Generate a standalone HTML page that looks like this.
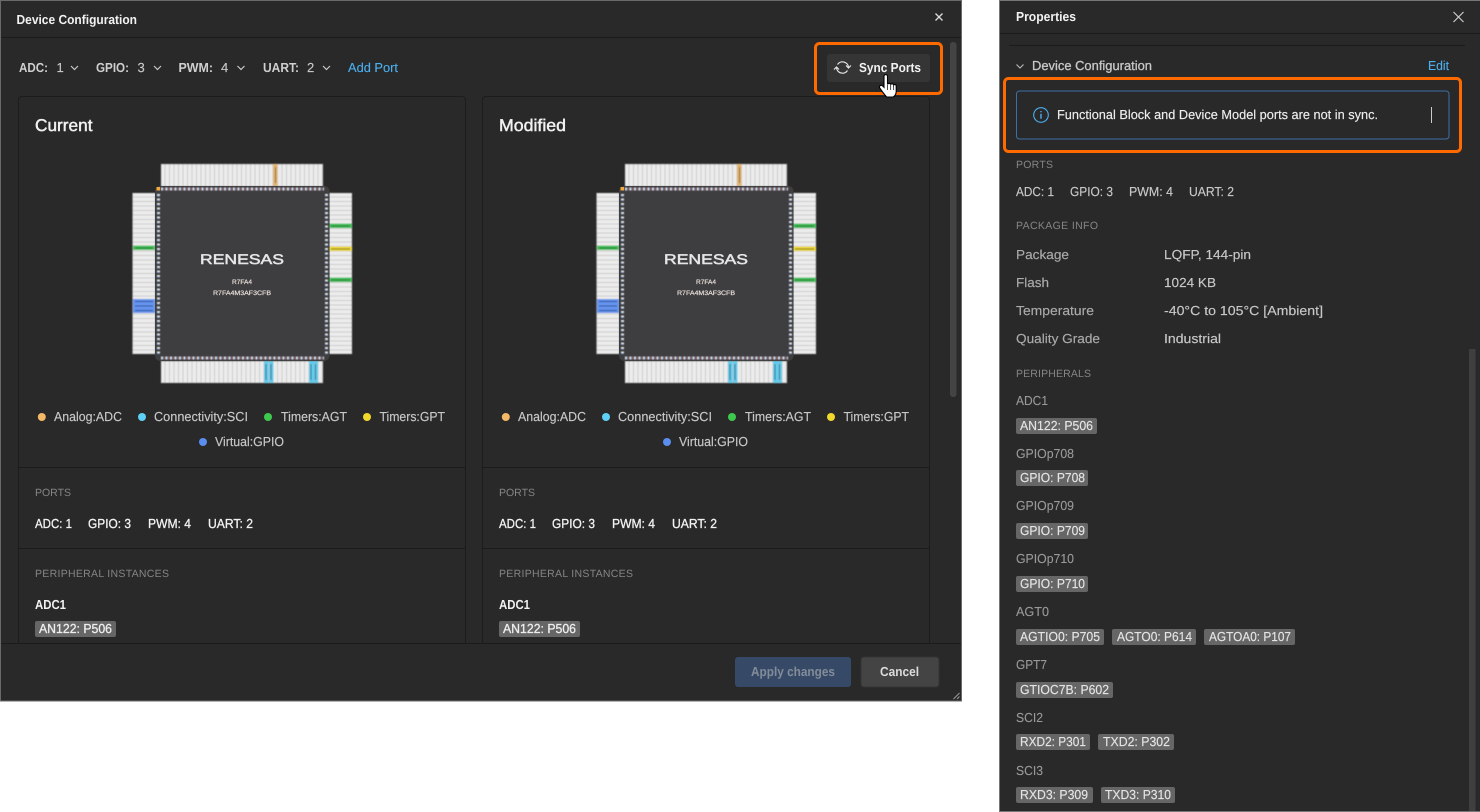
<!DOCTYPE html>
<html lang="en"><head><meta charset="utf-8"><title>Device Configuration</title>
<style>
html,body{margin:0;padding:0;background:#fff;width:1480px;height:812px;overflow:hidden}
svg{display:block;font-family:"Liberation Sans",sans-serif}
.b{font-weight:bold}
.w{fill:#f2f2f2}
.s{font-size:13px}
.c{fill:#c8c8c8;stroke:#c8c8c8;stroke-width:.15px}
.g{fill:#999;stroke:#999;stroke-width:.1px}
.h{font-size:10.5px;fill:#858585}
.l{fill:#4cb0f0;stroke:#4cb0f0;stroke-width:.1px}
.tag{fill:#666}
.tt{font-size:13px;fill:#eee;stroke:#eee;stroke-width:.15px}
</style></head><body>
<svg width="1480" height="812" viewBox="0 0 1480 812" xmlns="http://www.w3.org/2000/svg" text-rendering="geometricPrecision">
<defs>
<filter id="soft" x="-5%" y="-5%" width="110%" height="110%"><feGaussianBlur stdDeviation=".4"/></filter>
<pattern id="vs" width="4.5" height="22" patternUnits="userSpaceOnUse" x="29"><rect width="4.5" height="22" fill="#ececec"/><rect x="3.500" width="1" height="22" fill="#cccccc"/></pattern>
<pattern id="hs" width="23" height="4.5" patternUnits="userSpaceOnUse" y="29"><rect width="23" height="4.5" fill="#ececec"/><rect y="3.500" width="23" height="1" fill="#cccccc"/></pattern>
<symbol id="chip" width="220" height="220" viewBox="0 0 220 220" overflow="visible">
<g filter="url(#soft)">
<rect x="29" y="0" width="162" height="22.500" fill="url(#vs)" stroke="#777" stroke-width=".6"/>
<rect x="29" y="197" width="162" height="22" fill="url(#vs)" stroke="#777" stroke-width=".6"/>
<rect x="0.500" y="29" width="23" height="161" fill="url(#hs)" stroke="#777" stroke-width=".6"/>
<rect x="197" y="29" width="23" height="161" fill="url(#hs)" stroke="#777" stroke-width=".6"/>
<rect x="141" y="0" width="4.500" height="22" fill="#e4b672"/><rect x="143" y="3" width="1" height="16" fill="#8a6a3a"/>
<rect x="132" y="197" width="4.500" height="22" fill="#66cbeb"/><rect x="137" y="197" width="4.500" height="22" fill="#66cbeb"/>
<rect x="177" y="197" width="4.500" height="22" fill="#66cbeb"/><rect x="181.500" y="197" width="4.500" height="22" fill="#66cbeb"/>
<rect x="133.500" y="200" width="1" height="16" fill="#37708a"/><rect x="138.500" y="200" width="1" height="16" fill="#37708a"/><rect x="178.500" y="200" width="1" height="16" fill="#37708a"/><rect x="183" y="200" width="1" height="16" fill="#37708a"/>
<rect x="1" y="81.500" width="22" height="4.500" fill="#4cc25e"/><rect x="3" y="83.500" width="18" height="1" fill="#1d6a2a"/>
<rect x="1" y="135" width="22" height="14" fill="#6594f0"/><rect x="3" y="137" width="18" height="1" fill="#2d4f96"/><rect x="3" y="141.500" width="18" height="1" fill="#2d4f96"/><rect x="3" y="146" width="18" height="1" fill="#2d4f96"/>
<rect x="197" y="59.500" width="23" height="4.500" fill="#4cc25e"/><rect x="199" y="61.500" width="19" height="1" fill="#1d6a2a"/>
<rect x="197" y="82.500" width="23" height="4.500" fill="#ecd83e"/><rect x="199" y="84.500" width="19" height="1" fill="#857818"/>
<rect x="197" y="113.500" width="23" height="4.500" fill="#4cc25e"/><rect x="199" y="115.500" width="19" height="1" fill="#1d6a2a"/>
</g>
<rect x="23" y="22" width="174.500" height="175" rx="5" fill="#3e3e40"/>
<g fill="none" stroke-width="3" filter="url(#soft)">
<path d="M29 25H192M29 194H192" stroke="#e6e6e6" stroke-dasharray="2.200 2.300"/>
<path d="M26.500 30V192M194.500 30V192" stroke="#e6e6e6" stroke-dasharray="2.200 2.300"/>
<path d="M30.500 25H192M30.500 194H192" stroke="#6c9bd0" stroke-dasharray="1 3.500"/>
<path d="M32 25H192M32 194H192" stroke="#c46a62" stroke-dasharray=".8 3.700"/>
<path d="M26.500 31.500V192M194.500 31.500V192" stroke="#7d9fc4" stroke-dasharray="1 3.500"/>
</g>
<rect x="24.500" y="23" width="3.500" height="3.500" fill="#f2a83a"/>
<text x="68" y="100" font-size="14" fill="#e6e6e6" stroke="#e6e6e6" stroke-width=".5" textLength="84" lengthAdjust="spacingAndGlyphs">RENESAS</text>
</symbol>
</defs>

<rect width="1480" height="812" fill="#fff"/>

<!-- dialog -->
<rect x="0.500" y="0.500" width="961" height="700.500" fill="#292929" stroke="#6a6a6a"/>
<rect x="1" y="37" width="960" height="1" fill="#1b1b1b"/>
<text x="16.500" y="24" class="b w" font-size="13" textLength="120.500" lengthAdjust="spacingAndGlyphs">Device Configuration</text>
<path d="M935.500 13.500l7 7m0-7l-7 7" stroke="#ddd" stroke-width="1.300" fill="none"/>

<g class="s b" fill="#cfcfcf">
<text x="19" y="72" textLength="29" lengthAdjust="spacingAndGlyphs">ADC:</text>
<text x="96" y="72" textLength="33" lengthAdjust="spacingAndGlyphs">GPIO:</text>
<text x="178.500" y="72" textLength="34.500" lengthAdjust="spacingAndGlyphs">PWM:</text>
<text x="263" y="72" textLength="36" lengthAdjust="spacingAndGlyphs">UART:</text>
</g>
<g class="s c">
<text x="56.500" y="72">1</text><text x="137.500" y="72">3</text><text x="221" y="72">4</text><text x="307" y="72">2</text>
</g>
<path d="M71 66l3.500 3.500L78 66M154 66l3.500 3.500L161 66M237.500 66l3.500 3.500L244.500 66M323 66l3.500 3.500L330 66" fill="none" stroke="#c8c8c8" stroke-width="1.200"/>
<text x="348" y="72" class="s l" textLength="50" lengthAdjust="spacingAndGlyphs">Add Port</text>

<rect x="827" y="54" width="103" height="28" rx="3" fill="#353535"/>
<g fill="none" stroke="#e6e6e6" stroke-width="1.200">
<path d="M837.500 64.500A6 6 0 0 1 848.500 67.500"/><path d="M847.500 70.500A6 6 0 0 1 836.500 67.500"/>
<path d="M846 65.500l2.500 2.500 2.500-2.500M834 69.500l2.500-2.500 2.500 2.500"/>
</g>
<text x="859" y="72" class="s b w" textLength="62" lengthAdjust="spacingAndGlyphs">Sync Ports</text>

<rect x="950" y="42" width="6.500" height="355" rx="3" fill="#444"/>

<!-- cards -->
<g fill="none" stroke="#1c1c1c">
<path d="M18.500 643V100a3.500 3.500 0 0 1 3.500-3.500H462a3.500 3.500 0 0 1 3.500 3.500V643"/>
<path d="M482.500 643V100a3.500 3.500 0 0 1 3.500-3.500H926a3.500 3.500 0 0 1 3.500 3.500V643"/>
<path d="M19 467.500H465M19 548.500H465M483 467.500H929M483 548.500H929"/>
</g>

<text x="35" y="131" font-size="17" class="w" textLength="57.500" lengthAdjust="spacingAndGlyphs" stroke="#f2f2f2" stroke-width=".45">Current</text>
<text x="499" y="131" font-size="17" class="w" textLength="67" lengthAdjust="spacingAndGlyphs" stroke="#f2f2f2" stroke-width=".45">Modified</text>

<use href="#chip" x="132" y="164" width="220" height="220"/>
<use href="#chip" x="596" y="164" width="220" height="220"/>
<g font-size="6.500" fill="#f0e4e0" stroke="#f0e4e0" stroke-width=".15">
<text x="232" y="284" textLength="20" lengthAdjust="spacingAndGlyphs">R7FA4</text>
<text x="213" y="295" textLength="58" lengthAdjust="spacingAndGlyphs">R7FA4M3AF3CFB</text>
<text x="696" y="284" textLength="20" lengthAdjust="spacingAndGlyphs">R7FA4</text>
<text x="677" y="295" textLength="58" lengthAdjust="spacingAndGlyphs">R7FA4M3AF3CFB</text>
</g>

<!-- legends -->
<g class="s c">
<text x="54" y="421" textLength="68" lengthAdjust="spacingAndGlyphs">Analog:ADC</text>
<text x="154" y="421" textLength="94" lengthAdjust="spacingAndGlyphs">Connectivity:SCI</text>
<text x="281" y="421" textLength="66" lengthAdjust="spacingAndGlyphs">Timers:AGT</text>
<text x="379.500" y="421" textLength="65.500" lengthAdjust="spacingAndGlyphs">Timers:GPT</text>
<text x="215" y="446" textLength="69" lengthAdjust="spacingAndGlyphs">Virtual:GPIO</text>
<text x="518" y="421" textLength="68" lengthAdjust="spacingAndGlyphs">Analog:ADC</text>
<text x="618" y="421" textLength="94" lengthAdjust="spacingAndGlyphs">Connectivity:SCI</text>
<text x="745" y="421" textLength="66" lengthAdjust="spacingAndGlyphs">Timers:AGT</text>
<text x="843.500" y="421" textLength="65.500" lengthAdjust="spacingAndGlyphs">Timers:GPT</text>
<text x="679" y="446" textLength="69" lengthAdjust="spacingAndGlyphs">Virtual:GPIO</text>
</g>
<circle cx="41.800" cy="417" r="4" fill="#f5b869"/><circle cx="142" cy="417" r="4" fill="#5fd0f5"/><circle cx="268" cy="417" r="4" fill="#3ec94e"/><circle cx="367" cy="417" r="4" fill="#f0d92c"/><circle cx="203" cy="442" r="4" fill="#5b8def"/>
<circle cx="505.800" cy="417" r="4" fill="#f5b869"/><circle cx="606" cy="417" r="4" fill="#5fd0f5"/><circle cx="732" cy="417" r="4" fill="#3ec94e"/><circle cx="831" cy="417" r="4" fill="#f0d92c"/><circle cx="667" cy="442" r="4" fill="#5b8def"/>

<!-- card lower text -->
<g class="h">
<text x="35" y="496" textLength="36">PORTS</text>
<text x="35" y="577" textLength="134">PERIPHERAL INSTANCES</text>
<text x="499" y="496" textLength="36">PORTS</text>
<text x="499" y="577" textLength="134">PERIPHERAL INSTANCES</text>
</g>
<g class="s w" stroke="#f2f2f2" stroke-width=".3">
<text x="35" y="528" textLength="37" lengthAdjust="spacingAndGlyphs">ADC: 1</text>
<text x="88" y="528" textLength="43" lengthAdjust="spacingAndGlyphs">GPIO: 3</text>
<text x="148" y="528" textLength="43" lengthAdjust="spacingAndGlyphs">PWM: 4</text>
<text x="208" y="528" textLength="45" lengthAdjust="spacingAndGlyphs">UART: 2</text>
<text x="499" y="528" textLength="37" lengthAdjust="spacingAndGlyphs">ADC: 1</text>
<text x="552" y="528" textLength="43" lengthAdjust="spacingAndGlyphs">GPIO: 3</text>
<text x="612" y="528" textLength="43" lengthAdjust="spacingAndGlyphs">PWM: 4</text>
<text x="672" y="528" textLength="45" lengthAdjust="spacingAndGlyphs">UART: 2</text>
</g>
<text x="35" y="609" class="s b w" textLength="31" lengthAdjust="spacingAndGlyphs">ADC1</text>
<text x="499" y="609" class="s b w" textLength="31" lengthAdjust="spacingAndGlyphs">ADC1</text>
<rect x="35" y="621" width="81" height="16" rx="2" class="tag"/>
<rect x="499" y="621" width="81" height="16" rx="2" class="tag"/>
<text x="39" y="633" class="tt" textLength="73" lengthAdjust="spacingAndGlyphs" style="stroke-width:.3px">AN122: P506</text>
<text x="503" y="633" class="tt" textLength="73" lengthAdjust="spacingAndGlyphs" style="stroke-width:.3px">AN122: P506</text>

<!-- footer -->
<rect x="1" y="643" width="960" height="57.500" fill="#292929"/>
<rect x="1" y="643" width="960" height="1" fill="#1b1b1b"/>
<rect x="735" y="657" width="116" height="30" rx="3" fill="#364a68"/>
<text x="751" y="676" class="s b" fill="#838c98" textLength="84" lengthAdjust="spacingAndGlyphs">Apply changes</text>
<rect x="861" y="657" width="78" height="30" rx="3" fill="#444" stroke="#333"/>
<text x="880" y="676" class="s b" fill="#ddd" textLength="39" lengthAdjust="spacingAndGlyphs">Cancel</text>
<path d="M953.500 699l6-6M957 699l2.500-2.500" stroke="#999" fill="none"/>

<!-- orange highlight 1 -->
<rect x="815.500" y="43.500" width="126" height="50" rx="4" fill="none" stroke="#ff6a00" stroke-width="3"/>

<!-- hand cursor -->
<path d="M884 76.500c0-2.500 3.500-2.500 3.500 0v8c.3-1.500 3-1.500 3.200.2.300-1.300 2.800-1.200 3 .4.500-1 2.500-.8 2.500.9v5.500c0 2.500-1.500 4.500-3 5.500h-6.500c-1.500-1.500-3-3.500-4.500-5.500l-2.500-3.500c-1-2 1.300-3.500 3-2l1.300 1.300z" fill="#fff" stroke="#000" stroke-width="1.100"/>
<path d="M887.500 85v5M890.700 85v5M893.700 86v4" stroke="#000" stroke-width=".7" fill="none"/>

<!-- properties panel -->
<rect x="999.500" y="0.500" width="481" height="811" fill="#292929" stroke="#777"/>
<rect x="1000" y="33" width="480" height="1" fill="#1b1b1b"/>
<rect x="1009" y="45" width="456" height="1" fill="#1b1b1b"/>
<text x="1016" y="21" class="s b w" textLength="60" lengthAdjust="spacingAndGlyphs">Properties</text>
<path d="M1453.500 12l10 10m0-10l-10 10" stroke="#ccc" stroke-width="1.200" fill="none"/>

<path d="M1016.500 64.500l3.500 3.500 3.500-3.500" stroke="#bbb" stroke-width="1.100" fill="none"/>
<text x="1032" y="70" class="s c" textLength="120" lengthAdjust="spacingAndGlyphs" style="stroke-width:.3px">Device Configuration</text>
<text x="1428" y="70" class="s l" textLength="21" lengthAdjust="spacingAndGlyphs">Edit</text>

<rect x="1016.500" y="91" width="432.500" height="48" rx="3" fill="none" stroke="#3f6fa8"/>
<circle cx="1041" cy="115" r="7.300" fill="none" stroke="#4cb0f0" stroke-width="1.100"/>
<path d="M1041 111v1.300M1041 113.800v5" stroke="#4cb0f0" stroke-width="1.400" fill="none"/>
<text x="1057" y="119" class="s" fill="#eee" stroke="#eee" stroke-width=".15" textLength="321" lengthAdjust="spacingAndGlyphs">Functional Block and Device Model ports are not in sync.</text>
<rect x="1431" y="107" width="1" height="16" fill="#ccc"/>
<rect x="1004.500" y="78.500" width="456" height="73" rx="4" fill="none" stroke="#ff6a00" stroke-width="3"/>

<g class="h">
<text x="1016" y="168" textLength="37">PORTS</text>
<text x="1016" y="229" textLength="82">PACKAGE INFO</text>
<text x="1016" y="377" textLength="75">PERIPHERALS</text>
</g>
<g class="s c">
<text x="1016" y="196" textLength="38" lengthAdjust="spacingAndGlyphs">ADC: 1</text>
<text x="1070" y="196" textLength="43" lengthAdjust="spacingAndGlyphs">GPIO: 3</text>
<text x="1129" y="196" textLength="44" lengthAdjust="spacingAndGlyphs">PWM: 4</text>
<text x="1189" y="196" textLength="45" lengthAdjust="spacingAndGlyphs">UART: 2</text>
<text x="1164" y="259" textLength="87" lengthAdjust="spacingAndGlyphs">LQFP, 144-pin</text>
<text x="1164" y="287" textLength="52" lengthAdjust="spacingAndGlyphs">1024 KB</text>
<text x="1164" y="315" textLength="159" lengthAdjust="spacingAndGlyphs">-40°C to 105°C [Ambient]</text>
<text x="1164" y="343" textLength="57" lengthAdjust="spacingAndGlyphs">Industrial</text>
</g>
<g class="s c" style="fill:#ababab;stroke:#ababab">
<text x="1016" y="259" textLength="53" lengthAdjust="spacingAndGlyphs">Package</text>
<text x="1016" y="287" textLength="33" lengthAdjust="spacingAndGlyphs">Flash</text>
<text x="1016" y="315" textLength="78" lengthAdjust="spacingAndGlyphs">Temperature</text>
<text x="1016" y="343" textLength="84" lengthAdjust="spacingAndGlyphs">Quality Grade</text>
</g>
<g class="s g">
<text x="1016" y="405" textLength="32" lengthAdjust="spacingAndGlyphs">ADC1</text>
<text x="1016" y="458" textLength="58" lengthAdjust="spacingAndGlyphs">GPIOp708</text>
<text x="1016" y="510" textLength="58" lengthAdjust="spacingAndGlyphs">GPIOp709</text>
<text x="1016" y="563" textLength="58" lengthAdjust="spacingAndGlyphs">GPIOp710</text>
<text x="1016" y="616" textLength="33" lengthAdjust="spacingAndGlyphs">AGT0</text>
<text x="1016" y="669" textLength="31" lengthAdjust="spacingAndGlyphs">GPT7</text>
<text x="1016" y="722" textLength="27" lengthAdjust="spacingAndGlyphs">SCI2</text>
<text x="1016" y="775" textLength="27" lengthAdjust="spacingAndGlyphs">SCI3</text>
</g>
<g class="tag">
<rect x="1016" y="418" width="81" height="16" rx="2"/>
<rect x="1016" y="470" width="72" height="16" rx="2"/>
<rect x="1016" y="523" width="72" height="16" rx="2"/>
<rect x="1016" y="576" width="72" height="16" rx="2"/>
<rect x="1016" y="629" width="88" height="16" rx="2"/>
<rect x="1112" y="629" width="84" height="16" rx="2"/>
<rect x="1204" y="629" width="91" height="16" rx="2"/>
<rect x="1016" y="682" width="97" height="16" rx="2"/>
<rect x="1016" y="734" width="74" height="16" rx="2"/>
<rect x="1098" y="734" width="76" height="16" rx="2"/>
<rect x="1016" y="787" width="77" height="16" rx="2"/>
<rect x="1101" y="787" width="74" height="16" rx="2"/>
</g>
<g class="tt" style="fill:#e4e4e4;stroke:#e4e4e4">
<text x="1020" y="430" textLength="73" lengthAdjust="spacingAndGlyphs">AN122: P506</text>
<text x="1020" y="482" textLength="65" lengthAdjust="spacingAndGlyphs">GPIO: P708</text>
<text x="1020" y="535" textLength="65" lengthAdjust="spacingAndGlyphs">GPIO: P709</text>
<text x="1020" y="588" textLength="65" lengthAdjust="spacingAndGlyphs">GPIO: P710</text>
<text x="1020" y="641" textLength="80" lengthAdjust="spacingAndGlyphs">AGTIO0: P705</text>
<text x="1117" y="641" textLength="75" lengthAdjust="spacingAndGlyphs">AGTO0: P614</text>
<text x="1209" y="641" textLength="82" lengthAdjust="spacingAndGlyphs">AGTOA0: P107</text>
<text x="1020" y="694" textLength="89" lengthAdjust="spacingAndGlyphs">GTIOC7B: P602</text>
<text x="1020" y="746" textLength="66" lengthAdjust="spacingAndGlyphs">RXD2: P301</text>
<text x="1103" y="746" textLength="67" lengthAdjust="spacingAndGlyphs">TXD2: P302</text>
<text x="1020" y="799" textLength="68" lengthAdjust="spacingAndGlyphs">RXD3: P309</text>
<text x="1105" y="799" textLength="66" lengthAdjust="spacingAndGlyphs">TXD3: P310</text>
</g>
<rect x="1469" y="349" width="6.500" height="462" fill="#3f3f3f"/>
</svg>
</body></html>
